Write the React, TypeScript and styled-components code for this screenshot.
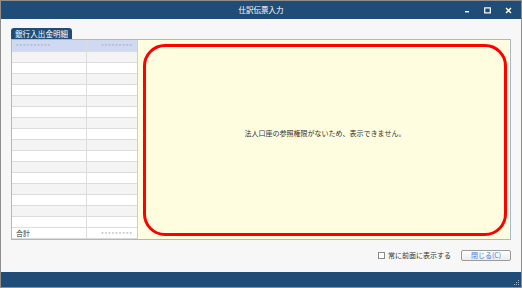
import styled, { createGlobalStyle } from 'styled-components';

const GlobalStyle = createGlobalStyle`
  html, body {
    margin: 0;
    padding: 0;
    background: #ffffff;
  }
  * {
    box-sizing: border-box;
  }
`;

const blue = '#1f4d78';
const font = `"Noto Sans CJK JP", "Noto Sans", sans-serif`;

const Window = styled.div`
  width: 522px;
  height: 288px;
  display: flex;
  flex-direction: column;
  border: 1px solid #8e8e8e;
  font-family: ${font};
  color: #333;
  overflow: hidden;
`;

const TitleBar = styled.div`
  height: 18px;
  background: ${blue};
  display: flex;
  align-items: center;
  position: relative;
  justify-content: center;
`;

const Title = styled.div`
  color: #ffffff;
  font-size: 7.5px;
  line-height: 1;
`;

const Controls = styled.div`
  position: absolute;
  right: 9px;
  top: 0;
  height: 18px;
  display: flex;
  align-items: center;
  gap: 14px;
`;

const Body = styled.div`
  flex: 1;
  background: #f7f7f7;
  display: flex;
  flex-direction: column;
  padding: 9px 10px 0 10px;
`;

const Tab = styled.div`
  align-self: flex-start;
  height: 11px;
  padding: 0 4px;
  background: ${blue};
  color: #ffffff;
  font-size: 7.5px;
  line-height: 11px;
  border-radius: 3px 3px 0 0;
  letter-spacing: 0.1px;
`;

const Panel = styled.div`
  height: 201px;
  flex-shrink: 0;
  display: flex;
  border: 1px solid #a8bac9;
`;

const Table = styled.div`
  width: 126px;
  display: flex;
  flex-direction: column;
  border-right: 1px solid #c8cfd8;
  background: #ffffff;
`;

const Row = styled.div<{ $kind?: 'head' | 'odd' | 'even' | 'total'; $h?: number }>`
  height: ${(p) => p.$h ?? 11}px;
  flex-shrink: 0;
  display: grid;
  grid-template-columns: 75px 1fr;
  border-bottom: 1px solid #dcdcdc;
  background: ${(p) =>
    p.$kind === 'head' ? '#cfd9f1' : p.$kind === 'odd' ? '#f4f4f4' : '#ffffff'};
  font-size: 7px;
  line-height: 10px;
`;

const Cell = styled.div<{ $right?: boolean }>`
  border-right: 1px solid #dcdcdc;
  padding: 0 4px;
  text-align: ${(p) => (p.$right ? 'right' : 'left')};
  overflow: hidden;
  white-space: nowrap;
  &:last-child {
    border-right: none;
  }
`;

const Mask = styled.span`
  font-family: "Liberation Sans", sans-serif;
  font-size: 6px;
  letter-spacing: 1.2px;
  color: #a3abbb;
`;

const Info = styled.div`
  flex: 1;
  background: #fefde0;
  padding: 4px 3px 3px 5px;
  display: flex;
`;

const Notice = styled.div`
  flex: 1;
  border: 3px solid #ff0000;
  border-radius: 22px;
  display: flex;
  align-items: center;
  justify-content: center;
  font-size: 7px;
  color: #333;
  padding-bottom: 14px;
`;

const Footer = styled.div`
  flex: 1;
  display: flex;
  align-items: center;
  justify-content: flex-end;
  gap: 10px;
  padding-bottom: 2px;
`;

const CheckLabel = styled.label`
  display: flex;
  align-items: center;
  gap: 3px;
  font-size: 7px;
  color: #333;
`;

const Box = styled.span`
  width: 7px;
  height: 7px;
  border: 1px solid #8a8a8a;
  background: #ffffff;
`;

const Button = styled.button`
  width: 50px;
  height: 11px;
  padding: 0;
  border: 1px solid #9a9a9a;
  border-radius: 2px;
  background: linear-gradient(#ffffff, #ececec);
  color: #3c7de0;
  font-family: ${font};
  font-size: 7px;
  line-height: 9px;
`;

const StatusBar = styled.div`
  height: 15px;
  background: ${blue};
  position: relative;
`;

const Grip = styled.svg`
  position: absolute;
  right: 1px;
  bottom: 1px;
`;

const rows = Array.from({ length: 16 }, (_, i) => i);

export default function App(): JSX.Element {
  return (
    <>
      <GlobalStyle />
      <Window>
        <TitleBar>
          <Title>仕訳伝票入力</Title>
          <Controls>
            <svg width="6" height="6" viewBox="0 0 6 6">
              <rect x="1" y="4" width="4" height="1.4" fill="#fff" />
            </svg>
            <svg width="7" height="7" viewBox="0 0 7 7">
              <rect x="0.7" y="0.9" width="5.6" height="5" fill="none" stroke="#fff" strokeWidth="1.2" />
            </svg>
            <svg width="7" height="7" viewBox="0 0 7 7">
              <path d="M1 1 L6 6 M6 1 L1 6" stroke="#fff" strokeWidth="1.5" />
            </svg>
          </Controls>
        </TitleBar>
        <Body>
          <Tab>銀行入出金明細</Tab>
          <Panel>
            <Table>
              <Row $kind="head" $h={12}>
                <Cell><Mask>**********</Mask></Cell>
                <Cell $right><Mask>*********</Mask></Cell>
              </Row>
              {rows.map((i) => (
                <Row key={i} $kind={i % 2 === 0 ? 'odd' : 'even'}>
                  <Cell />
                  <Cell $right />
                </Row>
              ))}
              <Row $kind="total" $h={11}>
                <Cell>合計</Cell>
                <Cell $right><Mask>*********</Mask></Cell>
              </Row>
            </Table>
            <Info>
              <Notice>法人口座の参照権限がないため、表示できません。</Notice>
            </Info>
          </Panel>
          <Footer>
            <CheckLabel>
              <Box />
              常に前面に表示する
            </CheckLabel>
            <Button>閉じる(C)</Button>
          </Footer>
        </Body>
        <StatusBar>
          <Grip width="6" height="6" viewBox="0 0 6 6">
            <rect x="4" y="0" width="1" height="1" fill="#9fb3c6" />
            <rect x="2" y="2" width="1" height="1" fill="#9fb3c6" />
            <rect x="4" y="2" width="1" height="1" fill="#9fb3c6" />
            <rect x="0" y="4" width="1" height="1" fill="#9fb3c6" />
            <rect x="2" y="4" width="1" height="1" fill="#9fb3c6" />
            <rect x="4" y="4" width="1" height="1" fill="#9fb3c6" />
          </Grip>
        </StatusBar>
      </Window>
    </>
  );
}
